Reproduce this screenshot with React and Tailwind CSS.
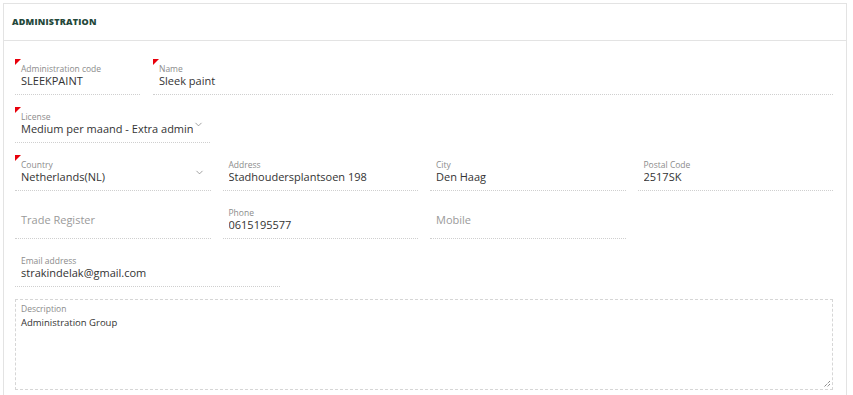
import { ChevronDown } from "lucide-react";

const font = { fontFamily: '"Open Sans", "Noto Sans", sans-serif' };

function Field({ label, value, placeholder, required, select, className = "" }) {
  return (
    <div className={`relative h-[36px] border-b border-dotted border-[#cfcfcf] ${className}`}>
      {required && (
        <span className="absolute left-0 top-0 h-0 w-0 border-b-[6px] border-l-[6px] border-b-transparent border-l-[#e8000b]" />
      )}
      {placeholder ? (
        <div className="pl-[6px] pt-[10px] text-[11px] leading-[14px] text-[#9a9a9a]">{placeholder}</div>
      ) : (
        <div className="pl-[6px] pt-[5px]">
          <div className="text-[8.5px] leading-[10px] text-[#8c8c8c]">{label}</div>
          <div className={`overflow-hidden whitespace-nowrap text-[11px] leading-[14px] text-[#333] ${select ? "mr-[17px]" : ""}`}>
            {value}
          </div>
        </div>
      )}
      {select && (
        <ChevronDown className="absolute right-[6px] top-[12px] text-[#777]" size={11} strokeWidth={1.5} />
      )}
    </div>
  );
}

export default function App() {
  return (
    <div className="min-h-screen bg-white pl-[3px] pr-[6px] pt-[3px]" style={font}>
      <div className="border border-[#e3e3e3] bg-white">
        {/* Header */}
        <div className="flex h-[37px] items-center border-b border-[#e3e3e3] pl-[8px]">
          <h2 className="text-[9px] font-extrabold tracking-[0.2px] text-[#24483a]">ADMINISTRATION</h2>
        </div>

        {/* Form */}
        <div className="flex flex-col gap-[12px] pb-[20px] pl-[11px] pr-[13px] pt-[18px]">
          <div className="flex gap-[13px]">
            <Field className="w-[125px]" label="Administration code" value="SLEEKPAINT" required />
            <Field className="flex-1" label="Name" value="Sleek paint" required />
          </div>

          <div className="flex">
            <Field className="w-[195px]" label="License" value="Medium per maand - Extra administratie" required select />
          </div>

          <div className="grid grid-cols-4 gap-x-[12px] gap-y-[12px]">
            <Field label="Country" value="Netherlands(NL)" required select />
            <Field label="Address" value="Stadhoudersplantsoen 198" />
            <Field label="City" value="Den Haag" />
            <Field label="Postal Code" value="2517SK" />
            <Field placeholder="Trade Register" />
            <Field label="Phone" value="0615195577" />
            <Field placeholder="Mobile" />
          </div>

          <div className="flex">
            <Field className="w-[265px]" label="Email address" value="strakindelak@gmail.com" />
          </div>

          <div className="relative h-[91px] border border-dashed border-[#d6d6d6] pl-[5px] pt-[4px]">
            <div className="text-[8.5px] leading-[10px] text-[#8c8c8c]">Description</div>
            <div className="pt-[2px] text-[9.5px] leading-[14px] text-[#333]">Administration Group</div>
            <svg className="absolute bottom-[1px] right-[1px]" width="8" height="8" viewBox="0 0 8 8">
              <path d="M7 1 L1 7 M7 4 L4 7" stroke="#555" strokeWidth="1" strokeDasharray="1 1" fill="none" />
            </svg>
          </div>
        </div>
      </div>
    </div>
  );
}
